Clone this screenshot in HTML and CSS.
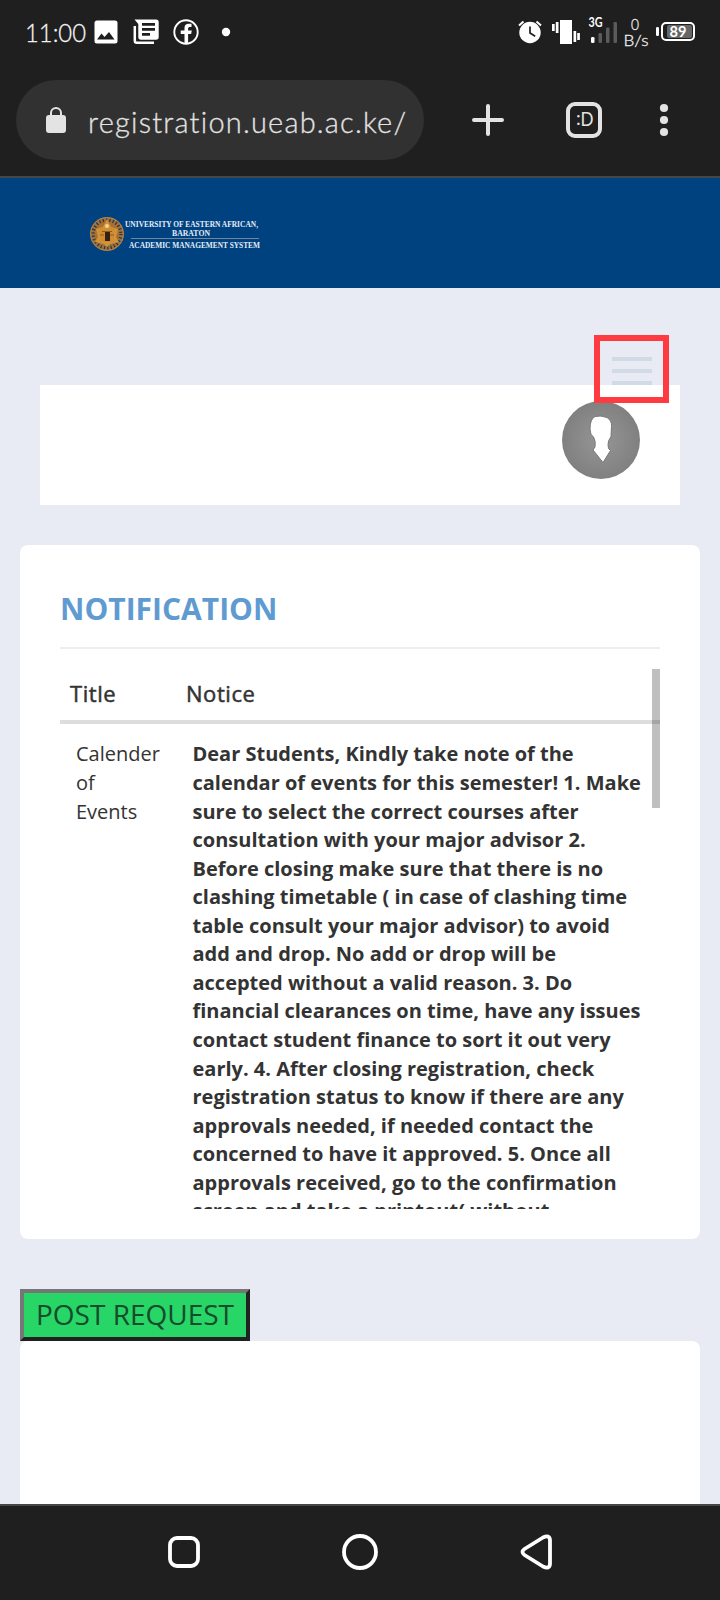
FILE: index.html
```html
<!DOCTYPE html>
<html lang="en">
<head>
<meta charset="utf-8">
<title>University of Eastern African, Baraton</title>
<link rel="stylesheet" href="styles.css">
</head>
<body>
<div class="phone">
  <header class="chrome">
    <svg class="status" viewBox="0 0 720 80" width="720" height="80">
      <g class="ui" fill="#fff">
        <text class="thin" x="25" y="41.800" font-size="26" textLength="61" lengthAdjust="spacingAndGlyphs">11:00</text>
        <path fill-rule="evenodd" d="M97 20.500h18a2.500 2.500 0 0 1 2.500 2.500v18a2.500 2.500 0 0 1-2.500 2.500h-18a2.500 2.500 0 0 1-2.500-2.500v-18a2.500 2.500 0 0 1 2.500-2.500zM97 39.500h17.500l-5.500-7.500-4.500 5-3-3.500z"/>
        <path fill-rule="evenodd" d="M134.500 19.500H156a2.700 2.700 0 0 1 2.700 2.700V37a2.700 2.700 0 0 1-2.700 2.700H141a2.700 2.700 0 0 1-2.700-2.700V24zM142 23v2.700h13V23zM142 28v2.700h13V28zM142 33v2.700h8V33z"/>
        <path d="M134.800 26v14.800a2 2 0 0 0 2 2H154" fill="none" stroke="#fff" stroke-width="2.500"/>
        <circle cx="186" cy="32" r="11.700" fill="none" stroke="#fff" stroke-width="1.900"/>
        <path d="M184.500 43.500V34h-3.800v-3.500h3.800v-2.700c0-2.600 1.700-4 4-4h3v3.300H190c-1.300 0-1.900.6-1.900 1.800v1.600h3.700l-.7 3.500h-3v9.500z"/>
        <circle cx="226" cy="32" r="4.200"/>
        <circle cx="530" cy="32.500" r="10.700"/>
        <path d="M519 25.500l4.500-4M541 25.500l-4.500-4" stroke="#fff" stroke-width="2"/>
        <path d="M530 26.500v6.500l5.200 3.300" fill="none" stroke="#1f1f1f" stroke-width="1.700"/>
        <path d="M560 20h12v24h-12zM555.800 22h2.700v11h-2.700zM552 24h2.700v7H552zM573.500 31h2.700v11h-2.700zM577.200 33h2.700v7h-2.700z"/>
        <text x="588.500" y="26.700" font-size="13" font-weight="700" textLength="14" lengthAdjust="spacingAndGlyphs">3G</text>
        <rect x="591" y="37" width="3.500" height="6" rx="1.300"/>
        <g fill="#5b5b5b"><rect x="598.500" y="33" width="3.500" height="10" rx="1.200"/><rect x="606" y="27.500" width="3.500" height="15.500" rx="1.200"/><rect x="613.500" y="22" width="3.500" height="21" rx="1.200"/></g>
        <text class="thin" x="631" y="29.500" font-size="15" textLength="8" lengthAdjust="spacingAndGlyphs">0</text>
        <text class="thin" x="623.500" y="46.300" font-size="15" textLength="25" lengthAdjust="spacingAndGlyphs">B/s</text>
        <rect x="656" y="27" width="3" height="9" rx="1.300"/>
        <rect x="662" y="23" width="32" height="17" rx="4" fill="none" stroke="#fff" stroke-width="2"/>
        <rect x="667" y="25" width="25" height="13" rx="2" fill="#666"/>
        <text x="669.500" y="36.500" font-size="15" font-weight="700" textLength="17" lengthAdjust="spacingAndGlyphs">89</text>
      </g>
    </svg>
    <div class="toolbar">
      <div class="address">
        <svg viewBox="0 0 408 80" width="408" height="80">
          <rect x="30" y="35" width="20" height="18" rx="3"/>
          <path d="M35 36v-3a5 5 0 0 1 10 0v3" fill="none" stroke="#e3e3e3" stroke-width="2"/>
          <text class="ui thin" x="72" y="52.500" font-size="29" textLength="318" lengthAdjust="spacing">registration.ueab.ac.ke/</text>
        </svg>
      </div>
      <svg class="actions" viewBox="0 0 296 80" width="296" height="80">
        <path d="M50 40h28M64 26v28" fill="none" stroke="#e3e3e3" stroke-width="4" stroke-linecap="round"/>
        <rect x="144" y="24" width="32" height="32" rx="7" fill="none" stroke="#e3e3e3" stroke-width="4"/>
        <text class="ui" x="156.500" y="46.200" font-size="19" textLength="13" lengthAdjust="spacingAndGlyphs">D</text>
        <text class="ui" x="152" y="45" font-size="19">:</text>
        <circle cx="240" cy="28" r="4.100"/><circle cx="240" cy="40" r="4.100"/><circle cx="240" cy="52" r="4.100"/>
      </svg>
    </div>
  </header>

  <div class="banner">
    <svg viewBox="0 0 200 40" width="200" height="40">
      <circle cx="17" cy="20" r="17" fill="#a96f2b"/>
      <circle cx="17" cy="20" r="14" fill="none" stroke="#173a66" stroke-width="3.500" stroke-dasharray="1.200 2.200"/>
      <circle cx="17" cy="20" r="16.400" fill="none" stroke="#a8845a"/>
      <circle cx="17" cy="20" r="11.500" fill="#ab712c"/>
      <path d="M17 5l4 8 7 2-2 8 3 5-9 2-3 3-3-3-9-2 3-5-2-8 7-2z" fill="#cf933f"/>
      <path d="M10 14h14v14H10z" fill="#d18c30"/><path d="M12 17.500h10M10 21h4M20 21h4" stroke="#8a5a20"/>
      <circle cx="17" cy="12" r="2" fill="#f7d185"/>
      <path d="M15 18h5v9h-5z" fill="#322013"/>
      <g class="logo-text">
        <text x="35" y="13" textLength="133" lengthAdjust="spacingAndGlyphs">UNIVERSITY OF EASTERN AFRICAN,</text>
        <text x="82" y="22" textLength="38" lengthAdjust="spacingAndGlyphs">BARATON</text>
        <text x="39" y="33.500" textLength="131" lengthAdjust="spacingAndGlyphs">ACADEMIC MANAGEMENT SYSTEM</text>
      </g>
      <path d="M41 24.500h128" stroke="#72869b"/>
    </svg>
  </div>

  <main class="page">
    <div class="menu-row">
      <div class="bars"><i></i><i></i><i></i></div>
      <div class="highlight"></div>
    </div>
    <div class="user-panel">
      <svg viewBox="0 0 78 78" width="78" height="78">
        <defs>
          <radialGradient id="disc"><stop offset="0" stop-color="#969696"/><stop offset="1" stop-color="#808080"/></radialGradient>
          <filter id="soft"><feGaussianBlur stdDeviation=".6"/></filter>
        </defs>
        <circle cx="39" cy="39" r="39" fill="url(#disc)"/>
        <path filter="url(#soft)" d="M33 15.500q6-1.500 12 1 5 3 4.500 9l-.5 10q-3 4-3 8l.5 4 2 2-7.500 12L31 49l2-3q1-6-1.500-10-3.500-2-3.500-8 0-10 5-12.500z" fill="#fff" stroke="#777" stroke-width="1"/>
      </svg>
    </div>

    <section class="card notification">
      <h1>NOTIFICATION</h1>
      <div class="scroller">
        <div class="row head"><div>Title</div><div>Notice</div></div>
        <div class="row body">
          <div>Calender<br>of<br>Events</div>
          <div class="notice">Dear Students, Kindly take note of the<br>calendar of events for this semester! 1. Make<br>sure to select the correct courses after<br>consultation with your major advisor 2.<br>Before closing make sure that there is no<br>clashing timetable ( in case of clashing time<br>table consult your major advisor) to avoid<br>add and drop. No add or drop will be<br>accepted without a valid reason. 3. Do<br>financial clearances on time, have any issues<br>contact student finance to sort it out very<br>early. 4. After closing registration, check<br>registration status to know if there are any<br>approvals needed, if needed contact the<br>concerned to have it approved. 5. Once all<br>approvals received, go to the confirmation<br>screen and take a printout( without</div>
        </div>
        <div class="thumb"></div>
      </div>
    </section>

    <button class="post">POST REQUEST</button>
    <section class="card requests"></section>
  </main>

  <nav class="navbar">
    <svg viewBox="0 0 720 94" width="720" height="94" fill="none" stroke="#fff" stroke-width="3.800" stroke-linejoin="round">
      <rect x="170" y="32" width="28" height="28" rx="7"/>
      <circle cx="360" cy="46" r="16"/>
      <path d="M524.500 43L543 31.500q6.500-3 7 2.500v24q-.5 5.500-7 2.500l-18.500-11.500q-4-3 0-6z"/>
    </svg>
  </nav>
</div>
</body>
</html>
```
FILE: styles.css
```css
* { box-sizing: border-box; }
body { margin: 0; background: #e8ebf4; color: #333; font: 20px/28.570px "Open Sans", "Noto Sans", sans-serif; }
svg { display: block; }
.phone { width: 720px; height: 1600px; display: flex; flex-direction: column; overflow: hidden; }
.ui { font-family: Lato, Roboto, sans-serif; font-variant-ligatures: none; }
.thin { font-weight: 300; stroke: currentColor; stroke-width: .3px; color: #e3e3e3; }

.chrome { height: 178px; flex: none; background: #1f1f1f; border-bottom: 2px solid #444746; }
.toolbar { display: flex; padding-left: 16px; fill: #e3e3e3; }
.address { width: 408px; height: 80px; border-radius: 40px; background: #313131; }

.banner { height: 110px; flex: none; background: #00417f; padding: 36px 0 0 90px; }
.logo-text { font: 700 8px "Liberation Serif", serif; fill: #e5edf8; }

.page { flex: 1; min-height: 0; padding: 0 20px; overflow: hidden; display: flex; flex-direction: column; align-items: flex-start; }
.menu-row { position: relative; width: 100%; height: 97px; flex: none; display: flex; justify-content: flex-end; align-items: flex-end; padding-right: 48px; }
.bars { width: 40px; display: flex; flex-direction: column; gap: 8px; }
.bars i { height: 4px; background: #d2dae6; }
.highlight { position: absolute; z-index: 2; top: 47px; right: 31px; width: 75px; height: 68px; border: 6px solid #ff3b41; }
.user-panel { width: 640px; height: 120px; flex: none; margin: 0 20px 40px; padding: 16px 40px 0 0; background: #fff; display: flex; justify-content: flex-end; }

.card { width: 680px; flex: none; background: #fff; border-radius: 8px; }
.notification { height: 694px; padding: 40px 40px 0; margin-bottom: 50px; }
h1 { margin: 0 0 20px; height: 64px; border-bottom: 2px solid #eee; color: #5f9bd1; font-size: 30px; line-height: 47px; font-weight: 700; }
.scroller { position: relative; height: 540px; overflow: hidden; }
.row { display: grid; grid-template-columns: 116px 1fr; white-space: nowrap; }
.head { height: 55px; padding: 9px 10px; border-bottom: 4px solid #ddd; font-size: 22px; line-height: 31.400px; letter-spacing: .55px; -webkit-text-stroke: .5px #333; }
.body { grid-template-columns: 116.500px 1fr; padding: 16.400px 16px; }
.notice { font-weight: 700; }
.thumb { position: absolute; top: 0; right: 0; width: 8px; height: 139px; background: rgba(0, 0, 0, .25); }

.post { width: 230px; height: 52px; flex: none; padding: 0 0 2px; border: 4px solid; border-color: #767676 #212121 #212121 #767676; background: #28d567; color: #164b2b; font: 28px/40px "Open Sans", sans-serif; white-space: nowrap; }
.requests { height: 180px; }
.navbar { height: 96px; flex: none; background: #1f1f1f; border-top: 2px solid #444746; }
```
